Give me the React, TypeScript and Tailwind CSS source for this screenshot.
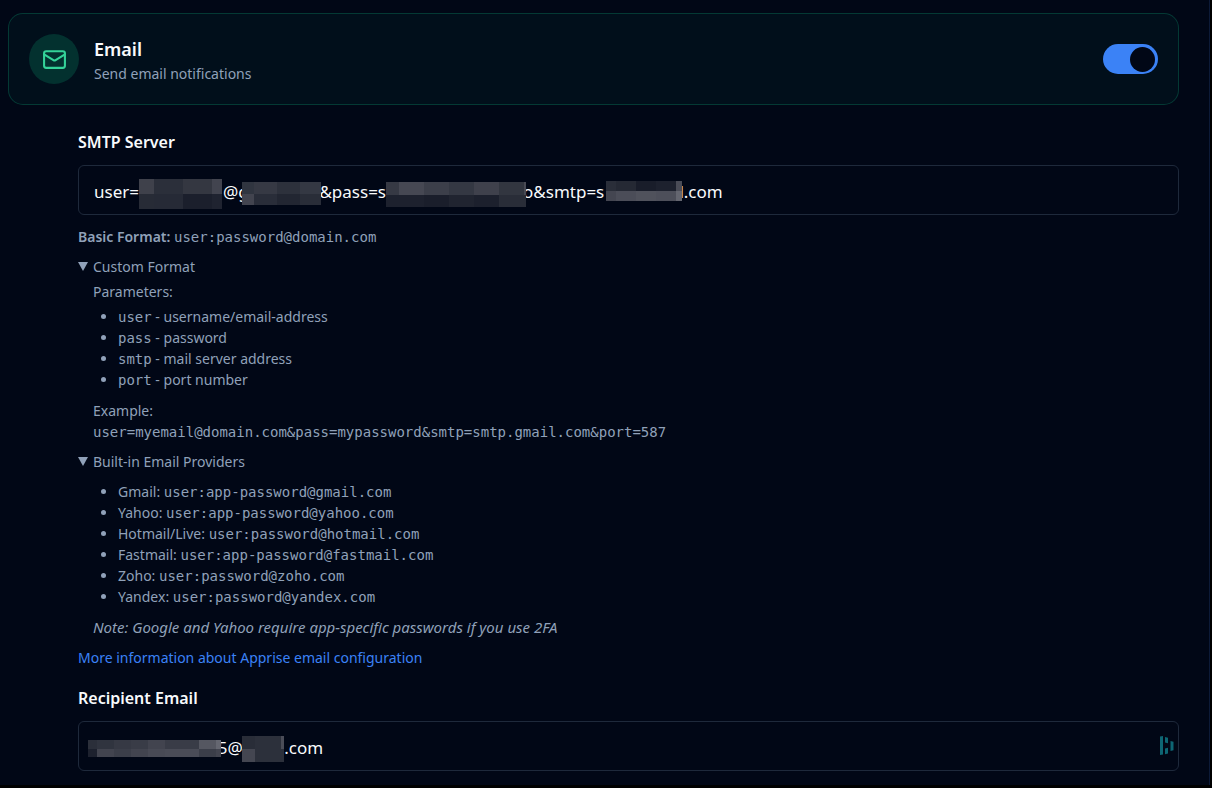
import { useState } from "react";

type Cell = [x: number, y: number, w: number, h: number, fill: string];

function Mosaic({ width, height, cells, className }: { width: number; height: number; cells: Cell[]; className: string }) {
  return (
    <svg
      aria-hidden="true"
      width={width}
      height={height}
      viewBox={`0 0 ${width} ${height}`}
      shapeRendering="crispEdges"
      className={`pointer-events-none absolute ${className}`}
    >
      {cells.map(([x, y, w, h, fill]) => (
        <rect key={`${x}-${y}`} x={x} y={y} width={w} height={h} fill={fill} />
      ))}
    </svg>
  );
}

const userCells: Cell[] = [
  [0, 0, 15, 15, "#3f414b"], [15, 0, 29, 15, "#2b2f3a"], [44, 0, 29, 15, "#343741"], [73, 0, 10, 15, "#42444f"],
  [0, 15, 15, 15, "#272b36"], [15, 15, 29, 15, "#262a36"], [44, 15, 29, 15, "#1b1f2c"], [73, 15, 10, 15, "#1f2330"],
];
const domainCells: Cell[] = [
  [0, 0, 12, 12, "#303540"], [12, 0, 23, 12, "#363944"], [35, 0, 23, 12, "#2d313c"], [58, 0, 21, 12, "#343843"],
  [0, 12, 12, 11, "#42444f"], [12, 12, 23, 11, "#292d39"], [35, 12, 23, 11, "#222632"], [58, 12, 21, 11, "#292d38"],
];
const passCells: Cell[] = [
  [0, 0, 13, 13, "#363944"], [13, 0, 25, 13, "#464853"], [38, 0, 25, 13, "#3c3f4a"], [63, 0, 25, 13, "#343843"], [88, 0, 25, 13, "#3f414c"], [113, 0, 25, 13, "#323640"], [138, 0, 2, 13, "#484a54"],
  [0, 13, 38, 12, "#1d212e"], [38, 13, 25, 12, "#1a1e2b"], [63, 13, 25, 12, "#202430"], [88, 13, 25, 12, "#1c202d"], [113, 13, 27, 12, "#292d38"],
];
const smtpCells: Cell[] = [
  [0, 0, 10, 10, "#2a2e39"], [10, 0, 20, 10, "#252934"], [30, 0, 20, 10, "#191d2a"], [50, 0, 20, 10, "#1d212e"], [70, 0, 6, 10, "#4a4c57"],
  [0, 10, 10, 10, "#444651"], [10, 10, 20, 10, "#4b4d58"], [30, 10, 20, 10, "#50525c"], [50, 10, 20, 10, "#4d4f5a"], [70, 10, 6, 10, "#646670"],
];
const recipientCells: Cell[] = [
  [0, 0, 9, 9, "#2b2f3a"], [9, 0, 17, 9, "#30343f"], [26, 0, 17, 9, "#363944"], [43, 0, 17, 9, "#393c47"], [60, 0, 17, 9, "#42444f"], [77, 0, 34, 9, "#393c47"], [111, 0, 17, 9, "#555761"], [128, 0, 5, 9, "#656771"],
  [0, 9, 9, 8, "#1d212e"], [9, 9, 17, 8, "#42444f"], [26, 9, 17, 8, "#3b3e49"], [43, 9, 17, 8, "#42444f"], [60, 9, 17, 8, "#484a55"], [77, 9, 34, 8, "#4a4c57"], [111, 9, 17, 8, "#3b3e49"], [128, 9, 5, 8, "#42444f"],
];
const recipientDomainCells: Cell[] = [
  [0, 0, 13, 13, "#292d38"], [13, 0, 26, 13, "#2c303b"], [39, 0, 3, 13, "#4b4d58"],
  [0, 13, 13, 13, "#444651"], [13, 13, 29, 13, "#2c303b"],
];

const parameters = [
  ["user", "username/email-address"],
  ["pass", "password"],
  ["smtp", "mail server address"],
  ["port", "port number"],
];

const providers = [
  ["Gmail", "user:app-password@gmail.com"],
  ["Yahoo", "user:app-password@yahoo.com"],
  ["Hotmail/Live", "user:password@hotmail.com"],
  ["Fastmail", "user:app-password@fastmail.com"],
  ["Zoho", "user:password@zoho.com"],
  ["Yandex", "user:password@yandex.com"],
];

const gap = (n: number) => "\u00a0".repeat(n);

function Code({ children }: { children: string }) {
  return <code className="font-['DejaVu_Sans_Mono',monospace] text-[14px] leading-none">{children}</code>;
}

function Summary({ children }: { children: string }) {
  return (
    <summary className="flex cursor-pointer list-none items-center gap-[5px]">
      <svg aria-hidden="true" width="10" height="9" viewBox="0 0 10 9" className="fill-slate-400">
        <path d="M0 0h10L5 9z" />
      </svg>
      {children}
    </summary>
  );
}

const fieldClass =
  "block h-[50px] w-full rounded-md border border-[#1e293b] bg-transparent px-[15px] pt-[2px] text-[17px] text-slate-50 outline-none focus:border-slate-600";

export default function App() {
  const [enabled, setEnabled] = useState(true);
  const [server, setServer] = useState(
    `user=${gap(19)}@g${gap(16)}&pass=s${gap(31)}o&smtp=s${gap(17)}l.com`,
  );
  const [recipient, setRecipient] = useState(`${gap(28)}5@g${gap(7)}.com`);

  return (
    <main className="min-h-screen bg-black pr-[2px] font-['Noto_Sans',sans-serif] text-sm leading-[21px] text-slate-400">
      <div className="border-r border-[#0c1a38] bg-[#010716] pt-[13px] pr-[30px] pb-[14px] pl-2">
        <header className="flex items-center gap-[15px] rounded-[15px] border border-[#10b981]/25 bg-[#10b981]/5 p-5">
          <span className="flex size-[50px] shrink-0 items-center justify-center rounded-full bg-[#10b981]/20">
            <svg aria-hidden="true" width="25" height="25" viewBox="0 0 24 24" fill="none" stroke="#34d399" strokeWidth="2" strokeLinecap="round" strokeLinejoin="round">
              <rect x="2" y="4" width="20" height="16" rx="2" />
              <path d="m22 7-8.97 5.7a1.94 1.94 0 0 1-2.06 0L2 7" />
            </svg>
          </span>
          <div className="flex-1 pt-[2px]">
            <h2 className="text-lg leading-[27px] font-semibold text-slate-50">Email</h2>
            <p>Send email notifications</p>
          </div>
          <button
            type="button"
            role="switch"
            aria-checked={enabled}
            aria-label="Email notifications"
            onClick={() => setEnabled(!enabled)}
            className={`flex h-[30px] w-[55px] items-center rounded-full px-[3px] ${enabled ? "justify-end bg-[#3b82f6]" : "justify-start bg-slate-800"}`}
          >
            <span className="size-[25px] rounded-full bg-[#010716]" />
          </button>
        </header>

        <div className="pt-7 pl-[70px]">
          <label htmlFor="smtp" className="block text-base leading-[18px] font-semibold text-slate-50">SMTP Server</label>
          <div className="relative mt-[14px]">
            <input id="smtp" value={server} onChange={(e) => setServer(e.target.value)} className={fieldClass} />
            <Mosaic width={83} height={30} cells={userCells} className="top-[14px] left-[61px]" />
            <Mosaic width={79} height={23} cells={domainCells} className="top-[17px] left-[164px]" />
            <Mosaic width={140} height={25} cells={passCells} className="top-[17px] left-[308px]" />
            <Mosaic width={76} height={20} cells={smtpCells} className="top-[16px] left-[528px]" />
          </div>

          <div className="mt-[11px] flex flex-col items-start gap-[9px]">
            <p>
              <strong className="font-semibold">Basic Format:</strong> <Code>user:password@domain.com</Code>
            </p>
            <details open>
              <Summary>Custom Format</Summary>
              <div className="mt-1 pl-[15px]">
                <p>Parameters:</p>
                <ul className="mt-1 mb-[10px] list-disc pl-[25px]">
                  {parameters.map(([name, text]) => (
                    <li key={name}>
                      <Code>{name}</Code> - {text}
                    </li>
                  ))}
                </ul>
                <p>Example:</p>
                <p><Code>user=myemail@domain.com&pass=mypassword&smtp=smtp.gmail.com&port=587</Code></p>
              </div>
            </details>
            <details open>
              <Summary>Built-in Email Providers</Summary>
              <div className="mt-[9px] pl-[15px]">
                <ul className="mb-[10px] list-disc pl-[25px]">
                  {providers.map(([name, format]) => (
                    <li key={name}>
                      {name}: <Code>{format}</Code>
                    </li>
                  ))}
                </ul>
                <p className="text-[15px] italic">Note: Google and Yahoo require app-specific passwords if you use 2FA</p>
              </div>
            </details>
            <a href="#apprise" className="text-[#3b82f6] hover:underline">More information about Apprise email configuration</a>
          </div>

          <label htmlFor="recipient" className="mt-[21px] block text-base leading-[18px] font-semibold text-slate-50">Recipient Email</label>
          <div className="relative mt-[14px]">
            <input id="recipient" value={recipient} onChange={(e) => setRecipient(e.target.value)} className={fieldClass} />
            <Mosaic width={133} height={17} cells={recipientCells} className="top-[19px] left-[10px]" />
            <Mosaic width={42} height={26} cells={recipientDomainCells} className="top-[15px] left-[164px]" />
            <svg aria-hidden="true" width="14" height="19" viewBox="0 0 14 19" className="pointer-events-none absolute top-[15px] right-[5px] fill-[#0e6674]">
              <path d="M0 .6L3 0v18.4l-3 .6zM5 1l3 .8v5.4L5 6.4zM5 12.6l3-.8v5.6l-3 .8zM10.500 5l3 .8v8.4l-3 .8z" />
            </svg>
          </div>
        </div>
      </div>
    </main>
  );
}
